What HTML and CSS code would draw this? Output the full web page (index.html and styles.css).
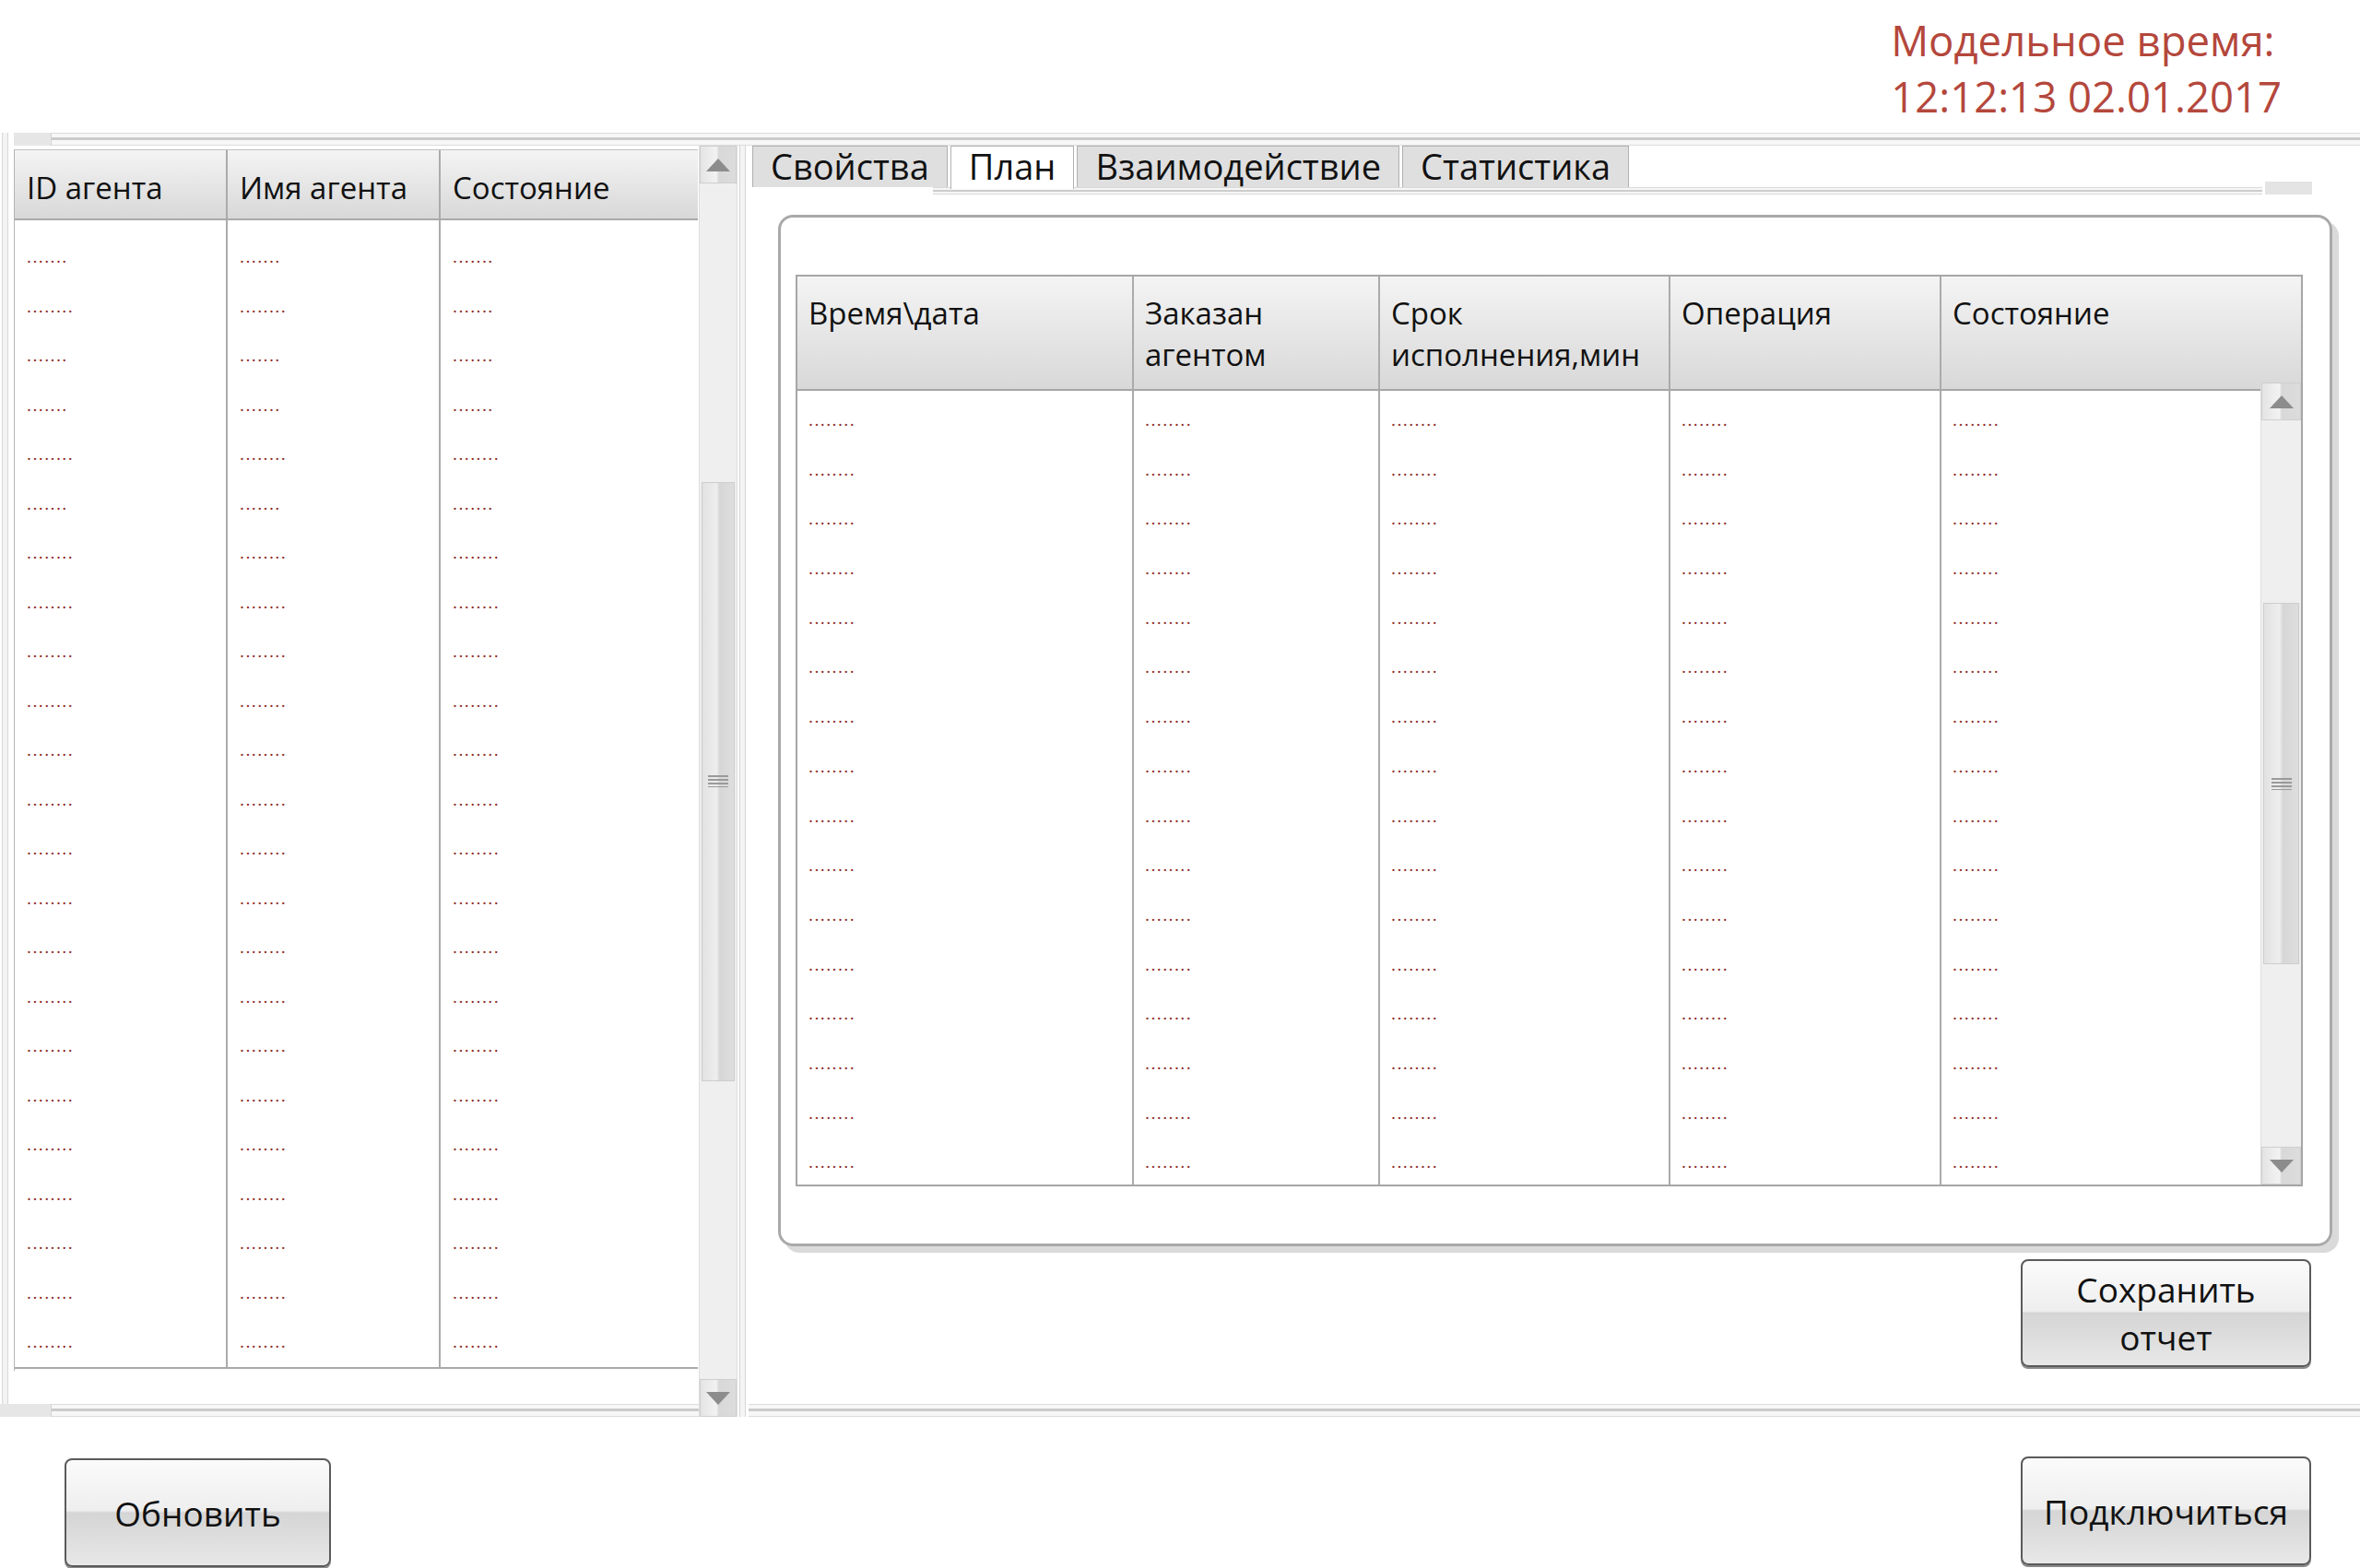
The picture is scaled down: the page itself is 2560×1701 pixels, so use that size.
FILE: index.html
```html
<!DOCTYPE html>
<html lang="ru">
<head>
<meta charset="utf-8">
<title>Агенты</title>
<link rel="stylesheet" href="styles.css">
</head>
<body>
<header class="top">
  <div class="clock">Модельное время:<br>12:12:13 02.01.2017</div>
</header>

<main class="frame">
  <section class="agents">
    <div class="edge-left"></div>
    <div class="rail-row"><span class="corner"></span><span class="rail"></span></div>
    <div class="rail-tail rail"></div>

    <div class="agent-table">
      <div class="ahead">
        <div class="hcell">ID агента</div>
        <div class="hcell">Имя агента</div>
        <div class="hcell last">Состояние</div>
      </div>
      <div class="abody">
        <div class="acol">
          <div class="d">.......</div><div class="d">........</div><div class="d">.......</div><div class="d">.......</div><div class="d">........</div><div class="d">.......</div><div class="d">........</div><div class="d">........</div><div class="d">........</div><div class="d">........</div><div class="d">........</div><div class="d">........</div><div class="d">........</div><div class="d">........</div><div class="d">........</div><div class="d">........</div><div class="d">........</div><div class="d">........</div><div class="d">........</div><div class="d">........</div><div class="d">........</div><div class="d">........</div><div class="d">........</div>
        </div>
        <div class="acol">
          <div class="d">.......</div><div class="d">........</div><div class="d">.......</div><div class="d">.......</div><div class="d">........</div><div class="d">.......</div><div class="d">........</div><div class="d">........</div><div class="d">........</div><div class="d">........</div><div class="d">........</div><div class="d">........</div><div class="d">........</div><div class="d">........</div><div class="d">........</div><div class="d">........</div><div class="d">........</div><div class="d">........</div><div class="d">........</div><div class="d">........</div><div class="d">........</div><div class="d">........</div><div class="d">........</div>
        </div>
        <div class="acol last">
          <div class="d">.......</div><div class="d">.......</div><div class="d">.......</div><div class="d">.......</div><div class="d">........</div><div class="d">.......</div><div class="d">........</div><div class="d">........</div><div class="d">........</div><div class="d">........</div><div class="d">........</div><div class="d">........</div><div class="d">........</div><div class="d">........</div><div class="d">........</div><div class="d">........</div><div class="d">........</div><div class="d">........</div><div class="d">........</div><div class="d">........</div><div class="d">........</div><div class="d">........</div><div class="d">........</div>
        </div>
      </div>
    </div>

    <div class="vscroll agents-scroll">
      <div class="sbtn"><svg width="26" height="14" viewBox="0 0 26 14"><polygon points="13,0 26,14 0,14" fill="#8c8c8c"/></svg></div>
      <div class="sgap"></div>
      <div class="thumb long"><span class="grip"></span></div>
      <div class="sgap"></div>
      <div class="sbtn"><svg width="26" height="14" viewBox="0 0 26 14"><polygon points="0,0 26,0 13,14" fill="#8c8c8c"/></svg></div>
    </div>
    <div class="edge-right"></div>
    <div class="rail-row bottom"><span class="corner wide"></span><span class="rail"></span></div>
  </section>

  <section class="work">
    <div class="rail"></div>
    <div class="work-body">
      <nav class="tabs">
        <div class="tab">Свойства</div>
        <div class="tab active">План</div>
        <div class="tab">Взаимодействие</div>
        <div class="tab">Статистика</div>
      </nav>
      <div class="tabline"><span class="tl"></span><span class="tl-end"></span></div>

      <div class="panel">
        <div class="plan">
          <div class="phead">Время\дата</div>
          <div class="phead">Заказан<br>агентом</div>
          <div class="phead">Срок<br>исполнения,мин</div>
          <div class="phead">Операция</div>
          <div class="phead last">Состояние</div>

          <div class="pcol">
            <div class="d">........</div><div class="d">........</div><div class="d">........</div><div class="d">........</div><div class="d">........</div><div class="d">........</div><div class="d">........</div><div class="d">........</div><div class="d">........</div><div class="d">........</div><div class="d">........</div><div class="d">........</div><div class="d">........</div><div class="d">........</div><div class="d">........</div><div class="d">........</div>
          </div>
          <div class="pcol">
            <div class="d">........</div><div class="d">........</div><div class="d">........</div><div class="d">........</div><div class="d">........</div><div class="d">........</div><div class="d">........</div><div class="d">........</div><div class="d">........</div><div class="d">........</div><div class="d">........</div><div class="d">........</div><div class="d">........</div><div class="d">........</div><div class="d">........</div><div class="d">........</div>
          </div>
          <div class="pcol">
            <div class="d">........</div><div class="d">........</div><div class="d">........</div><div class="d">........</div><div class="d">........</div><div class="d">........</div><div class="d">........</div><div class="d">........</div><div class="d">........</div><div class="d">........</div><div class="d">........</div><div class="d">........</div><div class="d">........</div><div class="d">........</div><div class="d">........</div><div class="d">........</div>
          </div>
          <div class="pcol">
            <div class="d">........</div><div class="d">........</div><div class="d">........</div><div class="d">........</div><div class="d">........</div><div class="d">........</div><div class="d">........</div><div class="d">........</div><div class="d">........</div><div class="d">........</div><div class="d">........</div><div class="d">........</div><div class="d">........</div><div class="d">........</div><div class="d">........</div><div class="d">........</div>
          </div>
          <div class="pcol last">
            <div class="d">........</div><div class="d">........</div><div class="d">........</div><div class="d">........</div><div class="d">........</div><div class="d">........</div><div class="d">........</div><div class="d">........</div><div class="d">........</div><div class="d">........</div><div class="d">........</div><div class="d">........</div><div class="d">........</div><div class="d">........</div><div class="d">........</div><div class="d">........</div>
          </div>
          <div class="vscroll plan-scroll">
            <div class="sbtn"><svg width="26" height="14" viewBox="0 0 26 14"><polygon points="13,0 26,14 0,14" fill="#8c8c8c"/></svg></div>
            <div class="sgap"></div>
            <div class="thumb short"><span class="grip"></span></div>
            <div class="sgap"></div>
            <div class="sbtn"><svg width="26" height="14" viewBox="0 0 26 14"><polygon points="0,0 26,0 13,14" fill="#8c8c8c"/></svg></div>
          </div>
        </div>
      </div>

      <button class="btn save">Сохранить<br>отчет</button>
    </div>
    <div class="rail"></div>
  </section>
</main>

<footer class="actions">
  <button class="btn refresh">Обновить</button>
  <button class="btn connect">Подключиться</button>
</footer>
</body>
</html>
```

FILE: styles.css
```css
* { box-sizing: border-box; }

html, body {
  margin: 0;
  padding: 0;
  background: #ffffff;
}

body {
  width: 2560px;
  height: 1701px;
  overflow: hidden;
  font-family: "Open Sans", "Noto Sans", "DejaVu Sans", sans-serif;
  color: #111;
}

/* ---------- top clock ---------- */
.top {
  height: 144px;
  display: flex;
  justify-content: flex-end;
  padding: 13px 85px 0 0;
}

.clock {
  font-size: 45.5px;
  line-height: 61px;
  color: #b4473c;
}

/* ---------- frame ---------- */
.frame {
  height: 1393px;
  display: grid;
  grid-template-columns: 812px 1fr;
}

.rail {
  display: block;
  height: 14px;
  background: linear-gradient(to bottom,
    #dcdcdc 0 1px, #f7f7f7 1px 5px, #cbcbcb 5px 8px,
    #f7f7f7 8px 13px, #dcdcdc 13px 14px);
}

/* ---------- agents (left) ---------- */
.agents {
  display: grid;
  grid-template-columns: 15px 742px 1px 42px 12px;
  grid-template-rows: 14px 1fr 14px;
}

.edge-left {
  grid-column: 1;
  grid-row: 1 / 3;
  background: linear-gradient(to right,
    #fff 0 2px, #d8d8d8 2px 3px, #f3f3f3 3px 8px, #d8d8d8 8px 9px, #fff 9px);
}

.rail-row {
  grid-column: 2 / 4;
  grid-row: 1;
  display: flex;
}

.rail-row .rail { flex: 1; }

.corner {
  width: 41px;
  height: 14px;
  background: #e6e6e6;
  border-right: 1px solid #d4d4d4;
}

.rail-row.bottom {
  grid-column: 1 / 4;
  grid-row: 3;
}

.corner.wide { width: 56px; }

.rail-tail {
  grid-column: 4 / 6;
  grid-row: 1;
}

.edge-right {
  grid-column: 5;
  grid-row: 2 / 4;
  background: linear-gradient(to right,
    #fff 0 2px, #d6d6d6 2px 3px, #f4f4f4 3px 8px, #d6d6d6 8px 9px, #fff 9px);
}

.agent-table {
  grid-column: 2;
  grid-row: 2;
  margin-top: 4px;
  height: 1325px;
  display: flex;
  flex-direction: column;
  border-left: 1px solid #b4b4b4;
}

.ahead {
  height: 77px;
  display: grid;
  grid-template-columns: 231px 231px 1fr;
  border-top: 1px solid #c0c0c0;
  border-bottom: 2px solid #a9a9a9;
  background: linear-gradient(to bottom, #f4f4f4, #d8d8d8);
}

.hcell {
  font-size: 33px;
  line-height: 45px;
  padding: 18px 0 0 13px;
  border-right: 2px solid #ababab;
  white-space: nowrap;
}

.hcell.last { border-right: none; }

.abody {
  display: grid;
  grid-template-columns: 231px 231px 1fr;
  height: 1246px;
  border-bottom: 2px solid #a9a9a9;
}

.acol {
  border-right: 2px solid #ababab;
}

.acol.last { border-right: none; }

.acol .d {
  height: 53.5px;
  padding: 29px 0 0 13px;
}

.d {
  font-size: 19px;
  line-height: 20px;
  letter-spacing: 1.4px;
  color: #8e2b27;
  white-space: nowrap;
}

/* ---------- scrollbars ---------- */
.vscroll {
  display: flex;
  flex-direction: column;
  background: #efefef;
  border-left: 1px solid #dedede;
  border-right: 1px solid #dedede;
}

.agents-scroll {
  grid-column: 4;
  grid-row: 2 / 4;
}

.sbtn {
  height: 41px;
  flex: none;
  display: flex;
  align-items: center;
  justify-content: center;
  border: 1px solid #cfcfcf;
  background: linear-gradient(to right,
    #e4e4e4 0%, #f2f2f2 45%, #d8d8d8 52%, #dcdcdc 100%);
}

.sgap { flex: 1; }

.thumb {
  flex: none;
  display: flex;
  align-items: center;
  justify-content: center;
  margin: 0 2px;
  border: 1px solid #cdcdcd;
  background: linear-gradient(to right,
    #e2e2e2 0%, #eeeeee 45%, #d6d6d6 55%, #dedede 100%);
}

.thumb.long { height: 650px; }
.thumb.short { height: 392px; }

.grip {
  width: 22px;
  height: 13px;
  background: repeating-linear-gradient(to bottom,
    #9a9a9a 0 2px, transparent 2px 4px);
}

/* ---------- work (right) ---------- */
.work {
  display: flex;
  flex-direction: column;
}

.work-body {
  flex: 1;
  display: flex;
  flex-direction: column;
}

.tabs {
  display: flex;
  gap: 3px;
  height: 45px;
  margin-left: 4px;
}

.tab {
  height: 45px;
  padding: 0 19px;
  font-size: 38px;
  line-height: 43px;
  background: #dfdfdf;
  border: 1px solid #b0b0b0;
  border-bottom: none;
  white-space: nowrap;
}

.tab.active {
  background: #ffffff;
  height: 47px;
  position: relative;
  z-index: 1;
}

.tabline {
  display: flex;
  height: 8px;
  margin-left: 200px;
  margin-right: 52px;
}

.tl {
  flex: 1;
  background: linear-gradient(to bottom,
    #dadada 0 1px, #f6f6f6 1px 3px, #cdcdcd 3px 5px, #f6f6f6 5px 7px, #dadada 7px 8px);
}

.tl-end {
  width: 51px;
  margin-left: 3px;
  margin-top: -6px;
  height: 14px;
  background: #e4e4e4;
}

.panel {
  margin: 22px 30px 0 32px;
  height: 1119px;
  border: 3px solid #a9a9a9;
  border-radius: 16px;
  box-shadow: 7px 7px 0 #dadada;
  padding: 62px 29px 0 16px;
}

.plan {
  height: 989px;
  display: grid;
  grid-template-columns: 365px 267px 315px 294px 1fr 44px;
  grid-template-rows: 124px 1fr;
  border: 2px solid #a6a6a6;
}

.phead {
  font-size: 33px;
  line-height: 45px;
  padding: 17px 0 0 12px;
  border-right: 2px solid #ababab;
  border-bottom: 2px solid #a6a6a6;
  background: linear-gradient(to bottom, #f4f4f4, #d8d8d8);
  white-space: nowrap;
}

.phead.last {
  grid-column: 5 / 7;
  border-right: none;
}

.pcol {
  border-right: 2px solid #ababab;
}

.pcol.last { border-right: none; }

.pcol .d {
  height: 53.7px;
  padding: 21px 0 0 12px;
}

.plan-scroll {
  border-right: none;
  margin-top: -9px;
  position: relative;
  z-index: 1;
}

/* ---------- buttons ---------- */
.btn {
  font-family: "Open Sans", "Noto Sans", "DejaVu Sans", sans-serif;
  font-size: 37px;
  color: #111;
  border: 2px solid #5a5a5a;
  border-radius: 8px;
  box-shadow: 0 2px 0 #8a8a8a;
  background: linear-gradient(to bottom,
    #fbfbfb 0%, #eeeeee 48%, #d5d5d5 50%, #dedede 75%, #e8e8e8 100%);
  padding: 0;
  cursor: pointer;
}

.save {
  align-self: flex-end;
  margin: 14px 53px 0 0;
  width: 315px;
  height: 117px;
  line-height: 52px;
}

.actions {
  height: 164px;
  display: flex;
  justify-content: space-between;
  align-items: flex-start;
  padding: 43px 53px 0 70px;
}

.refresh {
  width: 289px;
  height: 118px;
  margin-top: 2px;
}

.connect {
  width: 315px;
  height: 118px;
}
```
